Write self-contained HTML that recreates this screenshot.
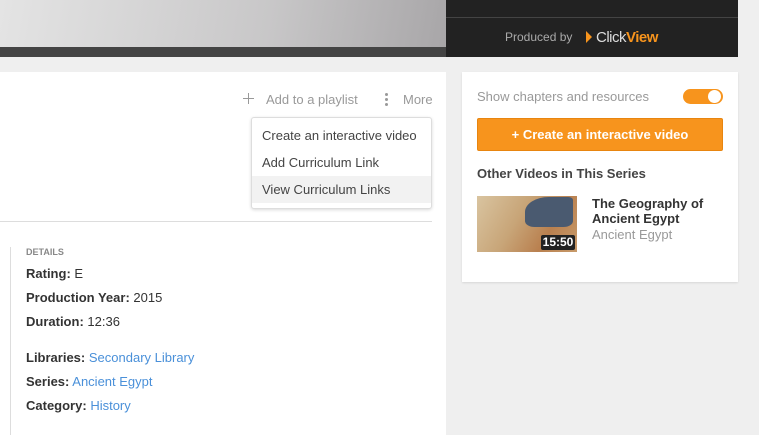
<!DOCTYPE html>
<html><head><style>
*{margin:0;padding:0;box-sizing:border-box}
body{width:759px;height:435px;background:#efefef;font-family:"Liberation Sans",Arial,sans-serif;position:relative;overflow:hidden;font-size:13px}
.abs{position:absolute}
.b{font-weight:bold;color:#333}
a{color:#4a90d9;text-decoration:none}
.mi{height:27px;line-height:27px;padding-left:10px;color:#444}
</style></head><body>
<div class="abs" style="left:0;top:0;width:446px;height:47px;background:linear-gradient(100deg,#e4e4e4,#c8c7c8 60%,#a8a6a8)"></div>
<div class="abs" style="left:0;top:47px;width:446px;height:10px;background:#444"></div>
<div class="abs" style="left:446px;top:0;width:292px;height:57px;background:#222"></div>
<div class="abs" style="left:446px;top:17px;width:292px;height:1px;background:#444"></div>
<div class="abs" style="left:505px;top:30px;color:#aaa;font-size:12px">Produced by</div>
<div class="abs" style="left:586px;top:31px;width:0;height:0;border-top:6px solid transparent;border-bottom:6px solid transparent;border-left:6px solid #f7941d"></div>
<div class="abs" style="left:596px;top:29px;color:#ddd;font-size:15px;letter-spacing:-0.5px">Click<b style="color:#f7941d">View</b></div>

<div class="abs" style="left:0;top:72px;width:446px;height:363px;background:#fff"></div>
<div class="abs" style="left:243px;top:98px;width:11px;height:1px;background:#999"></div>
<div class="abs" style="left:248px;top:93px;width:1px;height:11px;background:#999"></div>
<div class="abs" style="left:266px;top:92px;color:#999">Add to a playlist</div>
<div class="abs" style="left:385px;top:93px;width:3px;height:3px;background:#999;border-radius:50%;box-shadow:0 5px #999,0 10px #999"></div>
<div class="abs" style="left:403px;top:92px;color:#999">More</div>

<div class="abs" style="left:251px;top:117px;width:181px;height:92px;background:#fff;border:1px solid #ddd;border-radius:3px;box-shadow:0 1px 3px rgba(0,0,0,.15);padding-top:4px">
<div class="mi">Create an interactive video</div>
<div class="mi">Add Curriculum Link</div>
<div class="mi" style="background:#f2f2f2">View Curriculum Links</div>
</div>
<div class="abs" style="left:0;top:221px;width:432px;height:1px;background:#ddd"></div>
<div class="abs" style="left:10px;top:247px;width:1px;height:188px;background:#ddd"></div>
<div class="abs" style="left:26px;top:247px;color:#888;font-size:9px;font-weight:bold">DETAILS</div>
<div class="abs" style="left:26px;top:266px"><span class="b">Rating:</span> <span style="color:#333">E</span></div>
<div class="abs" style="left:26px;top:290px"><span class="b">Production Year:</span> <span style="color:#333">2015</span></div>
<div class="abs" style="left:26px;top:314px"><span class="b">Duration:</span> <span style="color:#333">12:36</span></div>
<div class="abs" style="left:26px;top:350px"><span class="b">Libraries:</span> <a>Secondary Library</a></div>
<div class="abs" style="left:26px;top:374px"><span class="b">Series:</span> <a>Ancient Egypt</a></div>
<div class="abs" style="left:26px;top:398px"><span class="b">Category:</span> <a>History</a></div>

<div class="abs" style="left:462px;top:72px;width:276px;height:210px;background:#fff;box-shadow:0 1px 2px rgba(0,0,0,.1)"></div>
<div class="abs" style="left:477px;top:89px;color:#999">Show chapters and resources</div>
<div class="abs" style="left:683px;top:89px;width:40px;height:15px;background:#f7941d;border-radius:8px"></div>
<div class="abs" style="left:708px;top:90px;width:13px;height:13px;background:#fff;border-radius:50%"></div>
<div class="abs" style="left:477px;top:118px;width:246px;height:33px;background:#f7941d;border:1px solid #e8850f;border-radius:2px;color:#fff;font-weight:bold;font-size:13px;text-align:center;line-height:31px">+ Create an interactive video</div>
<div class="abs" style="left:477px;top:166px;color:#444;font-weight:bold">Other Videos in This Series</div>
<div class="abs" style="left:477px;top:196px;width:100px;height:56px;background:linear-gradient(120deg,#d9c4a0,#c8a578 40%,#b9804f 70%,#c79a6a)"></div>
<div class="abs" style="left:525px;top:197px;width:48px;height:30px;background:#4a5a70;border-radius:50% 10% 20% 20%"></div>
<div class="abs" style="left:541px;top:235px;width:34px;height:15px;background:#222;border-radius:2px;color:#fff;font-weight:bold;font-size:12px;text-align:center;line-height:15px">15:50</div>
<div class="abs" style="left:592px;top:196px;color:#333;font-weight:bold;line-height:15px">The Geography of<br>Ancient Egypt</div>
<div class="abs" style="left:592px;top:227px;color:#999">Ancient Egypt</div>
</body></html>
